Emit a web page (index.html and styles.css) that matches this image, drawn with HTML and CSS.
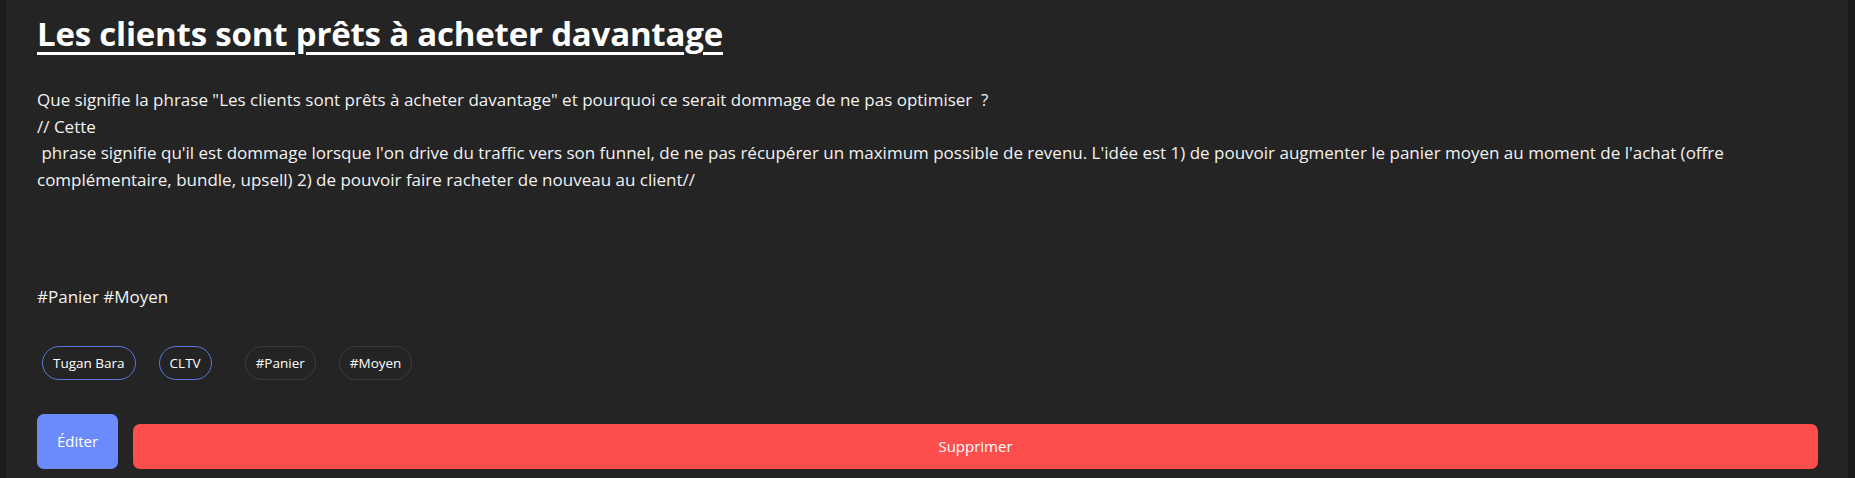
FILE: index.html
```html
<!DOCTYPE html>
<html lang="fr">
<head>
<meta charset="utf-8">
<title>Note</title>
<link rel="stylesheet" href="styles.css">
</head>
<body>
<div class="card">
  <h1 class="title">Les clients sont prêts à acheter davantage</h1>
  <div class="content">Que signifie la phrase "Les clients sont prêts à acheter davantage" et pourquoi ce serait dommage de ne pas optimiser  ?
// Cette
 phrase signifie qu'il est dommage lorsque l'on drive du traffic vers son funnel, de ne pas récupérer un maximum possible de revenu. L'idée est 1) de pouvoir augmenter le panier moyen au moment de l'achat (offre complémentaire, bundle, upsell) 2) de pouvoir faire racheter de nouveau au client//</div>
  <div class="hashtags">#Panier #Moyen</div>
  <div class="tags">
    <div class="tag-group">
      <span class="pill pill-blue">Tugan Bara</span>
      <span class="pill pill-blue">CLTV</span>
    </div>
    <div class="tag-group">
      <span class="pill pill-gray">#Panier</span>
      <span class="pill pill-gray">#Moyen</span>
    </div>
  </div>
  <div class="actions">
    <button class="btn btn-edit">Éditer</button>
    <button class="btn btn-delete">Supprimer</button>
  </div>
</div>
</body>
</html>
```

FILE: styles.css
```css
html, body {
  margin: 0;
  padding: 0;
  background: #1b1b1b;
  height: 100%;
}

body {
  font-family: "Open Sans", "Noto Sans", sans-serif;
  color: #f2f2f2;
}

.card {
  margin: 0 7px 0 6px;
  background: #242424;
  padding: 10px 30px 8px 31px;
  min-height: 100%;
  box-sizing: border-box;
}

.title {
  margin: 0;
  font-size: 33px;
  font-weight: 700;
  line-height: 48px;
  color: #ffffff;
  text-decoration: underline;
  text-decoration-thickness: 3px;
  text-underline-offset: 6px;
  letter-spacing: -0.2px;
  display: inline-block;
}

.content {
  margin-top: 29px;
  white-space: pre-wrap;
  font-size: 17px;
  line-height: 26.7px;
}

.hashtags {
  margin-top: 90px;
  font-size: 17px;
  line-height: 26px;
}

.tags {
  display: flex;
  gap: 33px;
  margin-top: 36px;
  padding-left: 5px;
}

.tag-group {
  display: flex;
  gap: 23px;
}

.pill {
  display: inline-flex;
  align-items: center;
  height: 34px;
  box-sizing: border-box;
  padding: 0 10px;
  border-radius: 17px;
  font-size: 13.5px;
  color: #ffffff;
}

.pill-blue {
  border: 1.5px solid #5d76dc;
}

.pill-gray {
  border: 1.5px solid #3c3c3c;
}

.actions {
  display: flex;
  align-items: flex-end;
  gap: 15px;
  margin-top: 34px;
}

.btn {
  border: none;
  color: #ffffff;
  font-family: inherit;
  font-size: 15px;
  cursor: pointer;
}

.btn-edit {
  width: 81px;
  height: 55px;
  border-radius: 7px;
  background: #6b8bfd;
}

.btn-delete {
  flex: 1;
  height: 45px;
  border-radius: 7px;
  background: #fe4d4d;
}
```
